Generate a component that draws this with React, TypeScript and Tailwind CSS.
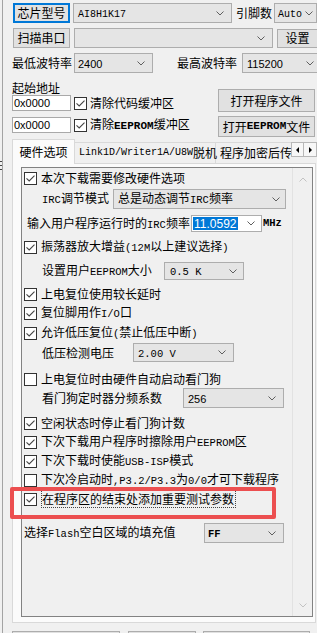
import React from 'react';

const MONO = "font-['Liberation_Mono',monospace] text-[10px]";
const MONO_L = "font-['Liberation_Mono',monospace] text-[10.5px]";
const MONO_B = "font-['Liberation_Mono',monospace] text-[11px] font-bold";
const SANS = "font-['Liberation_Sans',sans-serif] text-[11px]";

// ASCII runs get the narrow mono face, like SimSun's half-width latin
function T({ s, mono = MONO }: { s: string; mono?: string }) {
  return (
    <>
      {s.split(/([\x20-\x7e]+)/).map((p, i) =>
        i % 2 ? (
          <span key={i} className={mono}>
            {p}
          </span>
        ) : (
          p
        ),
      )}
    </>
  );
}

function Chevron({ up, color = '#5f5f5f' }: { up?: boolean; color?: string }) {
  return (
    <svg width="8" height="5" viewBox="0 0 8 5" className="shrink-0">
      <polyline
        points={up ? '0.5,4.5 4,1 7.5,4.5' : '0.5,0.5 4,4 7.5,0.5'}
        fill="none"
        stroke={color}
        strokeWidth="1"
      />
    </svg>
  );
}

function Check({ on }: { on?: boolean }) {
  return (
    <span className="flex h-[13px] w-[13px] shrink-0 items-center justify-center border border-[#333] bg-white">
      {on && (
        <svg width="9" height="7" viewBox="0 0 9 7">
          <polyline points="0.5,3.3 3.2,6 8.5,0.6" fill="none" stroke="#444" strokeWidth="1.1" />
        </svg>
      )}
    </span>
  );
}

function Btn({ className = '', children }: { className?: string; children?: React.ReactNode }) {
  return (
    <div className={`flex shrink-0 items-center justify-center whitespace-nowrap bg-[#e1e1e1] ${className}`}>
      {children}
    </div>
  );
}

function Combo({ className = '', children }: { className?: string; children?: React.ReactNode }) {
  return (
    <div
      className={`flex shrink-0 items-center justify-between overflow-hidden whitespace-pre border border-[#adadad] bg-[#e5e5e5] ${className}`}
    >
      <span>{children}</span>
      <Chevron />
    </div>
  );
}

function CheckRow({ on, s, className = '', focus }: { on?: boolean; s: string; className?: string; focus?: boolean }) {
  return (
    <div className={`flex h-[18px] shrink-0 items-center gap-[4px] whitespace-nowrap pl-[2px] ${className}`}>
      <Check on={on} />
      <span className={focus ? 'border border-dotted border-[#444] py-[2px] pr-px' : ''}>
        <T s={s} mono={MONO_L} />
      </span>
    </div>
  );
}

export default function App() {
  return (
    <div className="relative flex h-[633px] w-[317px] overflow-hidden bg-[#f0f0f0] font-['Noto_Sans_CJK_SC',sans-serif] text-[12px] leading-none text-black">
      <div className="flex w-[2px] shrink-0 flex-col">
        <div className="mt-[161px] h-px bg-[#444]" />
        <div className="mt-[3px] h-px bg-[#444]" />
        <div className="mt-[3px] h-px bg-[#444]" />
      </div>
      <div className="w-px shrink-0 bg-[#a3a3a3]" />

      <div className="flex min-w-0 flex-1 flex-col pl-[9px] pt-[3px]">
        {/* chip / pins */}
        <div className="flex h-[20px] shrink-0 items-center overflow-hidden">
          <Btn className="ml-px h-[20px] w-[57px] border-2 border-[#0078d7]">芯片型号</Btn>
          <Combo className="ml-[3px] h-[20px] w-[159px] pl-[4px] pr-[7px]">
            <span className={MONO}>AI8H1K17</span>
          </Combo>
          <span className="ml-[4px] shrink-0">引脚数</span>
          <Combo className="ml-[2px] h-[20px] w-[43px] pl-[3px] pr-[3px]">
            <span className={MONO}>Auto</span>
          </Combo>
        </div>

        {/* port */}
        <div className="mt-[5px] flex h-[20px] shrink-0 items-center overflow-hidden">
          <Btn className="ml-px h-[20px] w-[57px] border border-[#adadad]">扫描串口</Btn>
          <Combo className="ml-[4px] h-[20px] w-[199px] pr-[7px]" />
          <Btn className="ml-[4px] h-[19px] w-[41px] border border-[#adadad]">设置</Btn>
        </div>

        {/* baud */}
        <div className="mt-[5px] flex h-[20px] shrink-0 items-center overflow-hidden">
          <span className="w-[60px] shrink-0">最低波特率</span>
          <Combo className="ml-[2px] h-[20px] w-[79px] pl-[3px] pr-[7px]">
            <span className={SANS}>2400</span>
          </Combo>
          <span className="ml-[24px] w-[60px] shrink-0">最高波特率</span>
          <Combo className="ml-[5px] h-[20px] w-[80px] pl-[4px] pr-[7px]">
            <span className={SANS}>115200</span>
          </Combo>
        </div>

        {/* start address + file buttons */}
        <div className="mt-[8px] flex h-[56px] shrink-0">
          <div className="flex w-[206px] shrink-0 flex-col">
            <div className="flex h-[14px] items-center">起始地址</div>
            <div className="flex h-[16px] items-center">
              <div className={`flex h-[16px] w-[59px] shrink-0 items-center border border-[#a9a9a9] bg-white pl-px ${SANS}`}>0x0000</div>
              <span className="ml-[3px]">
                <Check on />
              </span>
              <span className="ml-[3px] whitespace-nowrap">清除代码缓冲区</span>
            </div>
            <div className="mt-[6px] flex h-[16px] items-center">
              <div className={`flex h-[16px] w-[59px] shrink-0 items-center border border-[#a9a9a9] bg-white pl-px ${SANS}`}>0x0000</div>
              <span className="ml-[3px]">
                <Check on />
              </span>
              <span className="ml-[3px] whitespace-nowrap">
                <T s="清除EEPROM缓冲区" mono={MONO_B} />
              </span>
            </div>
          </div>
          <div className="flex flex-col pt-[8px]">
            <Btn className="h-[23px] w-[97px] border border-[#adadad]">打开程序文件</Btn>
            <Btn className="mt-[4px] h-[21px] w-[97px] border border-[#adadad]">
              <T s="打开EEPROM文件" mono={MONO_B} />
            </Btn>
          </div>
        </div>

        {/* tabs */}
        <div className="mt-[2px] flex h-[24px] shrink-0 items-end">
          <div className="relative z-10 -mb-px flex h-[25px] w-[63px] shrink-0 items-center justify-center border border-b-0 border-[#d9d9d9] bg-[#fbfbfb]">
            硬件选项
          </div>
          <div className="flex h-[21px] w-[141px] shrink-0 items-center whitespace-nowrap border-r border-t border-[#d9d9d9] pl-[4px]">
            <T s="Link1D/Writer1A/U8W脱机" />
          </div>
          <div className="flex h-[21px] min-w-0 flex-1 items-center overflow-hidden whitespace-nowrap border-t border-[#d9d9d9] pl-[4px]">
            程序加密后传输
          </div>
          <div className="mb-[6px] flex shrink-0">
            <div className="flex h-[15px] w-[13px] items-center justify-center border border-[#b8b8b8] bg-[#f7f7f7]">
              <svg width="3" height="6" viewBox="0 0 3 6">
                <polygon points="3,0 0,3 3,6" fill="#000" />
              </svg>
            </div>
            <div className="flex h-[15px] w-[13px] items-center justify-center border border-l-0 border-[#b8b8b8] bg-[#f7f7f7]">
              <svg width="3" height="6" viewBox="0 0 3 6">
                <polygon points="0,0 3,3 0,6" fill="#000" />
              </svg>
            </div>
          </div>
        </div>

        {/* tab page */}
        <div className="flex h-[460px] w-[304px] shrink-0 flex-col border border-[#d9d9d9] bg-[#fbfbfb] pb-[5px] pl-[8px] pr-[2px] pt-[3px]">
          <div className="flex min-h-0 flex-1 border border-[#828282] bg-[#f0f0f0]">
            <div className="flex min-w-0 flex-1 flex-col overflow-hidden">
              <CheckRow on className="mt-[1px]" s="本次下载需要修改硬件选项" />
              <div className="mt-[2px] flex h-[20px] shrink-0 items-center pl-[20px]">
                <span className="w-[71px] shrink-0">
                  <T s="IRC调节模式" mono={MONO_L} />
                </span>
                <Combo className="h-[20px] w-[173px] pl-[4px] pr-[5px]">
                  <T s="总是动态调节IRC频率" mono={MONO_L} />
                </Combo>
              </div>
              <div className="mt-[6px] flex h-[17px] shrink-0 items-center whitespace-nowrap pl-[5px]">
                <span className="w-[164px] shrink-0">
                  <T s="输入用户程序运行时的IRC频率" mono={MONO_L} />
                </span>
                <div className="flex h-[17px] w-[71px] shrink-0 items-center border border-[#adadad] bg-white pl-px pr-[6px]">
                  <span className="flex h-[13px] items-center bg-[#0078d7] px-px font-['Liberation_Sans',sans-serif] text-[12px] text-white">
                    11.0592
                  </span>
                  <span className="flex-1" />
                  <Chevron />
                </div>
                <span className={`ml-px ${MONO_L} font-bold`}>MHz</span>
              </div>
              <CheckRow on className="mt-[6px]" s="振荡器放大增益(12M以上建议选择)" />
              <div className="mt-[6px] flex h-[18px] shrink-0 items-center pl-[20px]">
                <span className="w-[122px] shrink-0">
                  <T s="设置用户EEPROM大小" mono={MONO_L} />
                </span>
                <Combo className="h-[18px] w-[80px] pl-[5px] pr-[6px]">
                  <span className={MONO_L}>0.5 K</span>
                </Combo>
              </div>
              <CheckRow on className="mt-[5px]" s="上电复位使用较长延时" />
              <CheckRow on className="mt-[1px]" s="复位脚用作I/O口" />
              <CheckRow on className="mt-[2px]" s="允许低压复位(禁止低压中断)" />
              <div className="mt-[1px] flex h-[19px] shrink-0 items-center pl-[20px]">
                <span className="w-[91px] shrink-0">低压检测电压</span>
                <Combo className="h-[19px] w-[101px] pl-[4px] pr-[7px]">
                  <span className={MONO_L}>2.00 V</span>
                </Combo>
              </div>
              <CheckRow className="mt-[8px]" s="上电复位时由硬件自动启动看门狗" />
              <div className="flex h-[20px] shrink-0 items-center pl-[20px]">
                <span className="w-[141px] shrink-0">看门狗定时器分频系数</span>
                <Combo className="h-[20px] w-[101px] pl-[4px] pr-[7px]">
                  <span className={SANS}>256</span>
                </Combo>
              </div>
              <CheckRow on className="mt-[6px]" s="空闲状态时停止看门狗计数" />
              <CheckRow on className="mt-[1px]" s="下次下载用户程序时擦除用户EEPROM区" />
              <CheckRow on className="mt-[1px]" s="下次下载时使能USB-ISP模式" />
              <CheckRow className="mt-[1px]" s="下次冷启动时,P3.2/P3.3为0/0才可下载程序" />
              <CheckRow on focus className="mt-[1px]" s="在程序区的结束处添加重要测试参数" />
              <div className="mt-[15px] flex h-[20px] shrink-0 items-center pl-[2px]">
                <span className="w-[180px] shrink-0 whitespace-nowrap">
                  <T s="选择Flash空白区域的填充值" mono={MONO_L} />
                </span>
                <Combo className="h-[20px] w-[80px] pl-[3px] pr-[7px]">
                  <span className={`${MONO_L} font-bold`}>FF</span>
                </Combo>
              </div>
            </div>
            <div className="flex w-[20px] shrink-0 flex-col items-center justify-between border-l border-[#e2e2e2] pb-[8px] pt-[9px]">
              <Chevron up color="#c2c2c2" />
              <Chevron color="#c2c2c2" />
            </div>
          </div>
        </div>

        {/* bottom buttons, mostly off-screen */}
        <div className="mt-[8px] flex shrink-0">
          <Btn className="h-[24px] w-[108px] border border-[#adadad]" />
          <Btn className="ml-[8px] h-[24px] w-[68px] border border-[#adadad]" />
          <Btn className="ml-[7px] h-[24px] w-[107px] border border-[#adadad]" />
        </div>
      </div>

      {/* annotation box drawn over the screenshot */}
      <div className="absolute left-[10px] top-[487px] h-[32px] w-[266px] rounded-[2px] border-4 border-[#ec4f50]" />
    </div>
  );
}
